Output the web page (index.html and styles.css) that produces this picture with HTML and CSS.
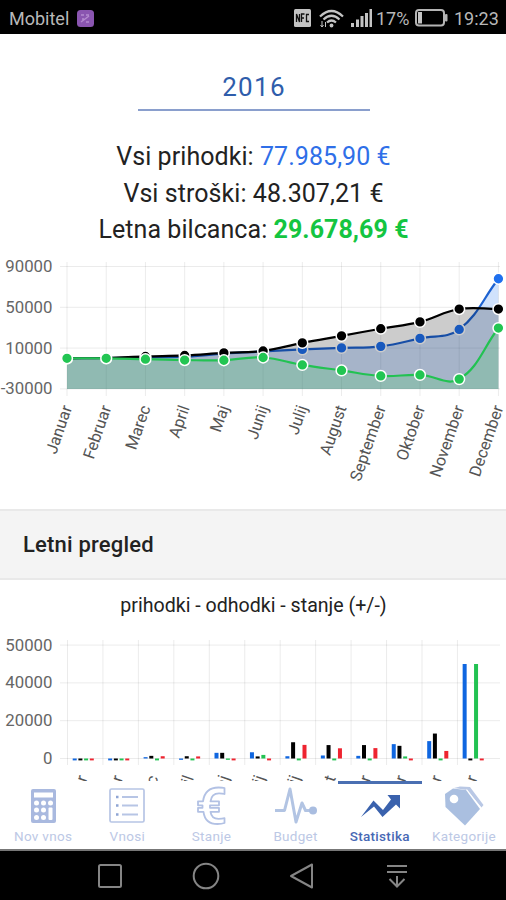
FILE: index.html
```
<!DOCTYPE html>
<html lang="sl">
<head>
<meta charset="UTF-8">
<meta name="viewport" content="width=device-width,initial-scale=1.0">
<title>Statistika</title>
<link rel="stylesheet" href="styles.css">
</head>
<body>

<header class="status">
  <span class="carrier">Mobitel</span>
  <svg class="app-ico" width="17" height="17" viewBox="0 0 17 17">
    <rect width="17" height="17" rx="3.5" fill="#8a55b0"/>
    <path d="M4 5h3M9 5h3M4 12l8-6M5 9h2M9 12h3" stroke="#b48acf" stroke-width="1.5" fill="none"/>
  </svg>
  <svg class="nfc" width="17" height="18" viewBox="0 0 17 18">
    <rect width="17" height="18" rx="1.5" fill="#c4c4c4"/>
    <path d="M2.5 13V5l3 8V5M7.500 13V5h3M7.500 9h2.500M15 5.500h-2.500v7H15" stroke="#111" stroke-width="1.300" fill="none"/>
  </svg>
  <svg class="wifi" width="25" height="19" viewBox="0 0 25 19">
    <g fill="none" stroke="#c4c4c4" stroke-width="2.200">
      <path d="M1 7.500Q12.500-3.500 24 7.500"/>
      <path d="M4.500 10.500q8-7.500 16 0"/>
      <path d="M8 13.500q4.500-4 9 0"/>
    </g>
    <circle cx="12.500" cy="16.500" r="1.900" fill="#c4c4c4"/>
    <path d="M3 12v6M1.500 16L3 18l1.500-2M6.500 18v-5" stroke="#c4c4c4" fill="none"/>
  </svg>
  <svg class="signal" width="22" height="18" viewBox="0 0 22 18" fill="#c4c4c4">
    <rect y="14" width="3" height="4"/><rect x="5" y="10.500" width="3" height="7.500"/>
    <rect x="9.500" y="7" width="3" height="11"/><rect x="14" y="4" width="3" height="14"/>
    <rect x="18.500" width="2.500" height="18"/>
  </svg>
  <span class="percent">17%</span>
  <svg class="battery" width="33" height="18" viewBox="0 0 33 18">
    <rect x="1" y="1" width="28" height="15.500" rx="3" fill="none" stroke="#b4b4b4" stroke-width="2"/>
    <rect x="3" y="3" width="4" height="11.500" fill="#c4c4c4"/>
    <rect x="30" y="5" width="2.500" height="7.500" rx="1" fill="#b4b4b4"/>
  </svg>
  <span class="clock">19:23</span>
</header>

<main class="content">
  <div class="year">2016</div>

  <div class="totals">
    <p>Vsi prihodki: <span class="income">77.985,90 €</span></p>
    <p>Vsi stroški: 48.307,21 €</p>
    <p>Letna bilcanca: <b class="balance">29.678,69 €</b></p>
  </div>

  <svg class="chart" id="lineChart" width="506" height="255" viewBox="0 254 506 255"></svg>

  <h2 class="section">Letni pregled</h2>
  <p class="legend">prihodki - odhodki - stanje (+/-)</p>

  <svg class="chart" id="barChart" width="506" height="240" viewBox="0 630 506 240"></svg>
</main>

<nav class="tabs">
  <a class="tab">
    <svg width="36" height="40" viewBox="0 0 36 40">
      <rect x="6" y="3" width="25" height="34" rx="2" fill="#a9b9df"/>
      <g fill="#fff">
        <rect x="9" y="6.500" width="19" height="5"/>
        <circle cx="11.500" cy="17" r="2.500"/><circle cx="18.500" cy="17" r="2.500"/><circle cx="25.500" cy="17" r="2.500"/>
        <circle cx="11.500" cy="24" r="2.500"/><circle cx="18.500" cy="24" r="2.500"/>
        <circle cx="11.500" cy="31.500" r="2.500"/><circle cx="18.500" cy="31.500" r="2.500"/>
        <rect x="23.500" y="21.500" width="4" height="12.500" rx="1"/>
      </g>
    </svg>
    Nov vnos
  </a>
  <a class="tab">
    <svg width="36" height="40" viewBox="0 0 36 40">
      <rect x="1" y="3" width="34" height="33" rx="1.500" fill="none" stroke="#b7c5e5" stroke-width="1.700"/>
      <path d="M13 11h16M13 19.500h16M13 28.500h16" stroke="#b7c5e5" stroke-width="2"/>
      <path d="M7 11h2.500M7 19.500h2.500M7 28.500h2.500" stroke="#8fa5d4" stroke-width="2.500"/>
    </svg>
    Vnosi
  </a>
  <a class="tab">
    <svg width="36" height="40" viewBox="0 0 36 40">
      <path d="M31.500 2v6q-2-.700-5.500-.700-7.500 0-8.500 8h8.500v4h-9v2.500h9v4h-8.500q1 7 8 7 4 0 6-.700V37q-3 1-7 1-12.500 0-14-12.200H5v-4h4.500v-2.500H5v-4h5Q12 1.500 25.500 1.500q4 0 6 .5z" fill="#fff" stroke="#b2c1e4" stroke-width="1.800" stroke-linejoin="round"/>
    </svg>
    Stanje
  </a>
  <a class="tab">
    <svg width="44" height="40" viewBox="0 0 44 40">
      <path d="M1 24.500h9.500L16 3l6 33 6-19 3.500 7.500H38" fill="none" stroke="#b2c4e3" stroke-width="3" stroke-linejoin="round"/>
      <circle cx="39" cy="24.500" r="4" fill="#a9bde0"/>
    </svg>
    Budget
  </a>
  <a class="tab active">
    <svg width="40" height="40" viewBox="0 0 40 40">
      <path d="M1 31L13.500 14.500l9.500 9.500 8-10.500L27.500 9H40v13.500l-4-4L22.500 31 14 20.500z" fill="#3a62ad"/>
    </svg>
    Statistika
  </a>
  <a class="tab">
    <svg width="40" height="40" viewBox="0 0 40 40">
      <path d="M10 2l6-1.500 10 .5 13.500 18-2 2.500L23 4z" fill="#b9c8e5"/>
      <path d="M22.500 3.500L37 22.500" stroke="#fff" stroke-width="1.200"/>
      <path d="M1 8l8-5.500L22 4l14 19-15 16.500L1.500 21z" fill="#aabfe0"/>
      <circle cx="10" cy="13" r="4.300" fill="#fff"/>
    </svg>
    Kategorije
  </a>
</nav>

<footer class="navbar">
  <svg width="28" height="28" viewBox="0 0 28 28"><rect x="3" y="3" width="22" height="22" rx="1.500"/></svg>
  <svg width="28" height="28" viewBox="0 0 28 28"><circle cx="14" cy="14" r="12.300"/></svg>
  <svg width="28" height="28" viewBox="0 0 28 28"><path d="M25 2.500v23L4 14z" stroke-linejoin="round"/></svg>
  <svg width="28" height="28" viewBox="0 0 28 28"><path d="M4 4h20M4 10h20M14 14v10M6.500 17l7.500 7.500 7.500-7.500"/></svg>
</footer>

<script src="charts.js"></script>
</body>
</html>
```
FILE: styles.css
```
*,*::before,*::after{box-sizing:border-box;margin:0;padding:0}
body{
  height:900px;
  display:flex;
  flex-direction:column;
  overflow:hidden;
  background:#fff;
  color:#222;
  font-family:Roboto,sans-serif;
}

/* === STATUS BAR === */
.status{
  flex:0 0 34px;
  display:flex;
  align-items:center;
  padding:2px 7px 0 9px;
  background:#000;
  color:#b8b8b8;
  font-size:18px;
}
.carrier{width:61px}
.app-ico{margin-left:7px}
.nfc{margin-left:auto}
.wifi{margin-left:8px}
.signal{margin-left:7px}
.percent{margin-left:3px;width:35px}
.battery{margin-left:4px}
.clock{margin-left:6px;width:45px}

/* === CONTENT === */
.content{
  flex:0 0 747px;
  display:flex;
  flex-direction:column;
  align-items:center;
  overflow:hidden;
}
.year{
  flex:none;
  width:232px;
  height:43px;
  margin:34px 0 0 2px;
  border-bottom:2px solid #8a9fcd;
  color:#2f5dab;
  font-size:26px;
  line-height:38px;
  letter-spacing:1.3px;
  text-align:center;
}
.totals{
  flex:none;
  height:143px;
  padding:28px 0 0 1px;
  font-size:25px;
  line-height:36.5px;
  letter-spacing:.06px;
  text-align:center;
}
.income{color:#2f6fe8}
.balance{color:#14c541}
.chart{flex:none;display:block}
.section{
  flex:none;
  width:100%;
  height:71px;
  padding-left:23px;
  border-top:2px solid #e9e9e9;
  border-bottom:2px solid #e9e9e9;
  background:#f4f4f4;
  font-size:22px;
  font-weight:500;
  line-height:67px;
  letter-spacing:.2px;
}
.legend{
  flex:none;
  height:50px;
  padding-left:1px;
  font-size:19.6px;
  line-height:51px;
}

/* === CHART TEXT === */
.axis{fill:#666;font-size:16.8px}
.month{fill:#555;font-size:16.3px}
.grid{stroke:#000;stroke-opacity:.08}

/* === TABS === */
.tabs{
  flex:0 0 70px;
  display:flex;
  padding-left:1px;
  border-bottom:2px solid #777;
}
.tab{
  flex:1;
  display:flex;
  flex-direction:column;
  align-items:center;
  padding-top:5px;
  color:#bcc8e5;
  font-size:13.5px;
  line-height:20px;
  letter-spacing:.3px;
}
.tab svg{flex:none}
.tab.active{
  padding-top:2px;
  border-top:3px solid #4a6fb2;
  color:#4768b4;
  font-weight:500;
}

/* === ANDROID NAV === */
.navbar{
  flex:1;
  display:flex;
  justify-content:space-between;
  align-items:center;
  padding:0 95px 0 96px;
  background:#000;
}
.navbar svg{fill:none;stroke:#858585;stroke-width:2}
```
FILE: charts.js
```
const months = ['Januar','Februar','Marec','April','Maj','Junij','Julij','August','September','Oktober','November','December'];

function line(x1, y1, x2, y2) {
  return `<path class="grid" d="M${x1} ${y1}L${x2} ${y2}"/>`;
}
function monthLabel(x, y, name) {
  return `<text class="month" text-anchor="end" transform="translate(${x},${y}) rotate(-71)" dy="5">${name}</text>`;
}
function yLabel(y, value) {
  return `<text class="axis" x="52.5" y="${y + 5.5}" text-anchor="end">${value}</text>`;
}

/* === LINE CHART === */
const series = [
  {stroke:'#1d62d0', dot:'#1f70ee', fill:'rgba(20,110,240,.2)',
   data:[0,200,900,1500,4600,6700,8700,10200,11700,19500,28300,77985]},
  {stroke:'#000', dot:'#000', fill:'rgba(0,0,0,.2)',
   data:[0,300,1800,2800,5300,7200,15100,22000,29000,35700,48300,48307]},
  {stroke:'#22c252', dot:'#22c552', fill:'rgba(90,200,120,.28)',
   data:[0,0,-900,-1700,-1900,800,-6500,-11900,-17300,-16300,-20400,29678]}
];
const lx = i => 67 + i * 39.22;
const ly = v => 358.3 - v * 0.00102;

/* bezier curve whose handles scale with the distance to each neighbour */
function curve(p) {
  const t = 0.4;
  const h = p.map((c, i) => {
    const a = p[i - 1] || c, b = p[i + 1] || c;
    const d1 = Math.hypot(c[0] - a[0], c[1] - a[1]);
    const d2 = Math.hypot(b[0] - c[0], b[1] - c[1]);
    const f1 = t * d1 / (d1 + d2), f2 = t * d2 / (d1 + d2);
    return [c[0] - f1 * (b[0] - a[0]), c[1] - f1 * (b[1] - a[1]),
            c[0] + f2 * (b[0] - a[0]), c[1] + f2 * (b[1] - a[1])];
  });
  let d = `M${p[0]}`;
  for (let i = 1; i < p.length; i++) {
    d += `C${h[i-1][2]},${h[i-1][3]} ${h[i][0]},${h[i][1]} ${p[i]}`;
  }
  return d;
}

let out = '';
[90000, 50000, 10000, -30000].forEach(v => {
  out += line(60, ly(v), 500, ly(v)) + yLabel(ly(v), v);
});
months.forEach((m, i) => {
  out += line(lx(i), 262, lx(i), 396) + monthLabel(lx(i) + .5, 406, m);
});
series.forEach(s => {
  const pts = s.data.map((v, i) => [lx(i), ly(v)]);
  const d = curve(pts);
  out += `<path d="${d}L498.4,389L67,389Z" fill="${s.fill}"/>`;
  out += `<path d="${d}" fill="none" stroke="${s.stroke}" stroke-width="2.2"/>`;
  pts.forEach(p => {
    out += `<circle cx="${p[0]}" cy="${p[1]}" r="5.4" fill="${s.dot}" stroke="#fff" stroke-width="1.5"/>`;
  });
});
document.getElementById('lineChart').innerHTML = out;

/* === BAR CHART === */
const colors = ['#0f66e0', '#000', '#22c252', '#ee2430'];
const bars = [
  [-1000,-1000,-1000,-1000],
  [-1000,-1000,-1000,-1000],
  [700,1400,-1000,1200],
  [-700,1200,-1000,1100],
  [3000,3000,-700,-1000],
  [3300,1100,1900,-1000],
  [1200,8600,-1000,7200],
  [1600,7100,-1000,5400],
  [1400,7100,-1000,5500],
  [7600,6700,1100,-1000],
  [9200,13200,-1000,4000],
  [50000,-1000,50000,-1000]
];
const bx = i => 67.5 + i * 35.45;
const by = v => 758.5 - v * 0.00189;

out = '';
[[60000,'50000'], [40000,'40000'], [20000,'20000'], [0,'0']].forEach(([v, text]) => {
  out += line(60, by(v), 500, by(v)) + yLabel(by(v), text);
});
bars.forEach((group, i) => {
  out += line(bx(i), 640, bx(i), 765) + monthLabel(bx(i) + 15.5, 776, months[i]);
  group.forEach((v, k) => {
    const y = Math.min(by(v), by(0));
    out += `<rect x="${bx(i) + 5.2 + k * 5.7}" y="${y}" width="4" height="${Math.abs(by(v) - by(0))}" fill="${colors[k]}"/>`;
  });
});
document.getElementById('barChart').innerHTML = out;
```
